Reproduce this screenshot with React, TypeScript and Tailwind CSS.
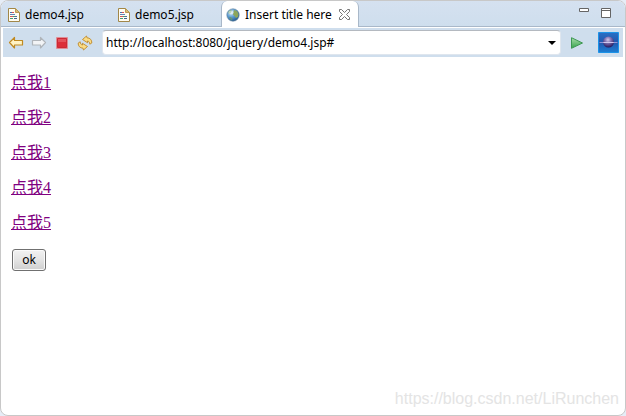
import type { ReactNode } from 'react'

const links = ['点我1', '点我2', '点我3', '点我4', '点我5']

function FileIcon() {
  return (
    <svg width="12" height="14" viewBox="0 0 12 14" className="shrink-0">
      <path d="M.5 .5h7l4 4v9H.5z" fill="#fffdf3" stroke="#a18749" />
      <path d="M7.5 .5v4h4z" fill="#dcbb70" stroke="#b99a55" />
      <path d="M2 4.500h2M7 8.500h2" stroke="#4a6ea5" />
      <path d="M4 4.500h2M2 8.500h3" stroke="#d6555b" />
      <path d="M2 6.500h5" stroke="#5f86b8" />
      <path d="M5 8.500h2M2 10.500h3" stroke="#4a9a70" />
      <path d="M6 10.500h3" stroke="#44648f" />
    </svg>
  )
}

function GlobeIcon() {
  return (
    <svg width="14" height="14" viewBox="0 0 14 14" className="shrink-0">
      <defs>
        <radialGradient id="globe" cx=".35" cy=".3" r=".75">
          <stop offset="0" stopColor="#d5e9f8" />
          <stop offset=".5" stopColor="#5b9bd0" />
          <stop offset="1" stopColor="#24588c" />
        </radialGradient>
      </defs>
      <circle cx="7" cy="7" r="6.2" fill="url(#globe)" stroke="#5e809c" strokeWidth=".6" />
      <path d="M8 2l3 1 1.5 3-.5 3-2 1-1.500-2L7 6.500z" fill="#8da65a" />
      <path d="M2 4l2-2 2 .5L5 5 3 6zM3 9l2 0 1.500 2L5.500 12.500z" fill="#6d9b64" opacity=".8" />
      <ellipse cx="5" cy="4.500" rx="2.500" ry="2" fill="#fff" opacity=".5" />
    </svg>
  )
}

function ToolButton({ label, children }: { label: string; children: ReactNode }) {
  return (
    <button type="button" aria-label={label} className="flex h-4 w-4 shrink-0 items-center justify-center">
      {children}
    </button>
  )
}

function Tab({ name }: { name: string }) {
  return (
    <button type="button" role="tab" aria-selected="false" className="flex h-full w-[110px] items-center gap-[5px] pl-[7px] pt-0.5">
      <FileIcon />
      {name}
    </button>
  )
}

function TabBar() {
  return (
    <div className="flex h-[26px] items-stretch bg-gradient-to-b from-[#d5e1f0] to-[#cedeed] shadow-[inset_0_-1px_0_#a9b8c9]">
      <div role="tablist" className="flex">
        <Tab name="demo4.jsp" />
        <Tab name="demo5.jsp" />
        <div className="flex w-[138px] items-center rounded-t-md border-x border-[#a9b8c9] bg-white pl-1 pt-0.5">
          <button type="button" role="tab" aria-selected="true" className="flex items-center gap-[5px] whitespace-nowrap">
            <GlobeIcon />
            Insert title here
          </button>
          <button type="button" aria-label="Close tab" className="ml-[7px] pb-0.5">
            <svg width="11" height="11" viewBox="0 0 11 11">
              <path d="M.5 .5h2l3 3 3-3h2v2l-3 3 3 3v2h-2l-3-3-3 3h-2v-2l3-3-3-3z" fill="#fff" stroke="#666" strokeWidth=".9" />
            </svg>
          </button>
        </div>
      </div>
      <div className="ml-auto flex items-start gap-3 pr-3.5 pt-[7px]">
        <button type="button" aria-label="Minimize">
          <svg width="10" height="11" viewBox="0 0 10 11">
            <path d="M.5 .5h9v3h-9z" fill="#fff" stroke="#656565" />
          </svg>
        </button>
        <button type="button" aria-label="Maximize">
          <svg width="10" height="11" viewBox="0 0 10 11">
            <path d="M.5 .5h9v9h-9zM.5 2.500h9" fill="#fff" stroke="#656565" />
          </svg>
        </button>
      </div>
    </div>
  )
}

function AddressBar() {
  return (
    <div className="mx-0.5 mt-px flex h-[29px] items-center bg-[#cfdeed] px-1">
      <div className="flex w-[95px] shrink-0 items-center gap-[7px] pl-px">
        <ToolButton label="Back">
          <svg width="16" height="14" viewBox="0 0 16 14">
            <path d="M1.500 6.500l5-5v3h8v4.500h-8v3z" fill="#fff3c4" stroke="#c08a22" strokeWidth="1.200" strokeLinejoin="round" />
          </svg>
        </ToolButton>
        <ToolButton label="Forward">
          <svg width="16" height="14" viewBox="0 0 16 14">
            <path d="M14.500 6.500l-5-5v3h-8v4.500h8v3z" fill="#f2f4f6" stroke="#b0b5ba" strokeWidth="1.200" strokeLinejoin="round" />
          </svg>
        </ToolButton>
        <ToolButton label="Stop">
          <svg width="12" height="12" viewBox="0 0 12 12">
            <path d="M.5 .5h11v11H.5z" fill="#e58d93" stroke="#df8d95" />
            <path d="M1.500 1.500h9v9h-9z" fill="#dc2f3a" stroke="#cb2a36" />
            <path d="M2 2h8v3H2z" fill="#e4525b" />
          </svg>
        </ToolButton>
        <ToolButton label="Refresh">
          <svg width="16" height="16" viewBox="0 0 16 16" fill="#fbdc84" stroke="#bd8a30" strokeWidth=".9" strokeLinejoin="round">
            <path d="M5.500 4.500L9.500 1l.5 1.800c3 0 5 2.200 4.800 5.200l-2 1.200c0-2-1-3-2.400-3.200l.3 1.800z" />
            <path d="M10.500 11.500l-4 3.500-.5-1.800c-3 0-5-2.200-4.800-5.200l2-1.200c0 2 1 3 2.400 3.200l-.3-1.800z" />
          </svg>
        </ToolButton>
      </div>
      <div className="flex h-[25px] min-w-0 flex-1 items-center rounded-sm border border-[#dfe6ee] border-t-[#b4b9c0] bg-white">
        <input
          type="text"
          aria-label="Address"
          defaultValue="http://localhost:8080/jquery/demo4.jsp#"
          className="h-full min-w-0 flex-1 bg-transparent pl-[3px] outline-none"
        />
        <button type="button" aria-label="Show address history" className="px-1">
          <svg width="8" height="4" viewBox="0 0 8 4">
            <path d="M0 0h8L4 4z" />
          </svg>
        </button>
      </div>
      <div className="flex w-[58px] shrink-0 items-center justify-between pl-2">
        <ToolButton label="Go">
          <svg width="14" height="12" viewBox="0 0 14 12">
            <defs>
              <linearGradient id="go" x2="0" y2="1">
                <stop stopColor="#a8dda9" />
                <stop offset="1" stopColor="#36a34d" />
              </linearGradient>
            </defs>
            <path d="M1.500 .7L12.500 6l-11 5.300z" fill="url(#go)" stroke="#3c9752" strokeLinejoin="round" />
          </svg>
        </ToolButton>
        <button type="button" aria-label="Open in external browser">
          <svg width="21" height="21" viewBox="0 0 21 21">
            <defs>
              <linearGradient id="space" x2="0" y2="1">
                <stop stopColor="#2a6fc4" />
                <stop offset=".5" stopColor="#2257ae" />
                <stop offset="1" stopColor="#1c7fd4" />
              </linearGradient>
              <radialGradient id="planet" cx=".45" cy=".3" r=".7">
                <stop stopColor="#d2cae8" />
                <stop offset=".4" stopColor="#8172b4" />
                <stop offset="1" stopColor="#24165a" />
              </radialGradient>
            </defs>
            <path d="M.5 .5h20v20H.5z" fill="url(#space)" stroke="#1c93e8" />
            <circle cx="10.500" cy="10" r="5.500" fill="url(#planet)" />
            <path d="M1.500 10.500h18" stroke="#8f93d6" />
            <path d="M5.500 10.500h10" stroke="#cfc6ec" />
          </svg>
        </button>
      </div>
    </div>
  )
}

export default function App() {
  return (
    <div className="flex min-h-screen bg-[#e6edf7] font-['Noto_Sans','Open_Sans',sans-serif] text-xs text-black">
      <div className="flex min-w-0 flex-1 flex-col overflow-hidden rounded-lg border border-[#c8c8c8] bg-white">
        <TabBar />
        <AddressBar />
        <main className="flex flex-1 flex-col items-start px-2.5 pb-1 pt-4 font-['Liberation_Serif','Noto_Sans_CJK_SC',serif] text-base leading-[19px]">
          <div className="flex flex-col items-start gap-4">
            {links.map((text) => (
              <a key={text} href="#" className="text-[#800080] underline">
                {text}
              </a>
            ))}
          </div>
          <button
            type="button"
            className="ml-px mt-[17px] h-[22px] w-[34px] rounded-[3px] border border-[#707070] bg-gradient-to-b from-[#f2f2f2] via-[#e4e4e4] to-[#cfcfcf] font-['Noto_Sans',sans-serif] text-xs shadow-[inset_0_0_0_1px_#fafafa]"
          >
            ok
          </button>
          <p className="-mr-1 mt-auto self-end font-['Liberation_Sans',sans-serif] text-base text-[#e4e4e4]">
            https://blog.csdn.net/LiRunchen
          </p>
        </main>
      </div>
    </div>
  )
}
